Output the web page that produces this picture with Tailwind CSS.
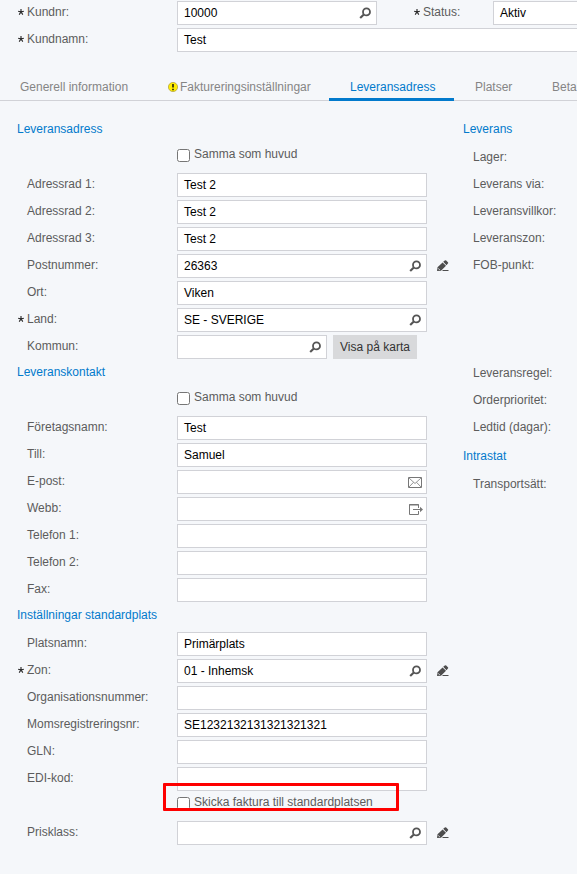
<!DOCTYPE html>
<html lang="sv">
<head>
<meta charset="utf-8">
<title>Kund</title>
<script src="https://cdn.jsdelivr.net/npm/@tailwindcss/browser@4"></script>
</head>
<body class="w-[577px] h-[874px] overflow-hidden bg-[#f5f7fa] text-[12px] text-[#5c5c5c]" style="font-family:'Liberation Sans',Arial,sans-serif">
<svg class="hidden">
  <symbol id="search" viewBox="0 0 12 12"><circle cx="7.5" cy="4.9" r="3.5" fill="none" stroke="#555" stroke-width="1.8"/><path d="M4.8 7.6 1.2 11.1" stroke="#555" stroke-width="2.1"/></symbol>
  <symbol id="pencil" viewBox="0 0 12 12"><path d="M0 11 .5 7.2 5.6 2.4 9 5.8 4 10.7ZM6.2 1.8 7.8.4Q8.5-.1 9.2.5L10.9 2.2Q11.5 2.9 10.9 3.6L9.5 5.2Z" fill="#4d4d4d"/><path d="m1.2 8.4 1.5 1.5" stroke="#f5f7fa" stroke-width=".9"/><path d="M5.5 10.5h6" stroke="#4d4d4d"/></symbol>
  <symbol id="mail" viewBox="0 0 14 11"><path d="M.5.5h13v10H.5Z" fill="none" stroke="#777"/><path d="m1 1 6 5.5L13 1M1 10l4.5-4.7M13 10 8.5 5.3" fill="none" stroke="#888" stroke-width=".9"/></symbol>
  <symbol id="open" viewBox="0 0 14 11"><path d="M9.5 4V.5h-9v10h9V7M0 1h10M4 5.5h8" fill="none" stroke="#777"/><path d="m11 2.7 3 2.8-3 2.8Z" fill="#777"/></symbol>
  <symbol id="star" viewBox="0 0 6 6"><path d="M3 3V0M3 3 .2 2.2M3 3l2.8-.8M3 3 1.2 5.6M3 3l1.8 2.6" stroke="#222" stroke-width="1.1"/></symbol>
</svg>

<header class="h-[73px] pt-px">
  <div class="flex h-[27px]">
    <div class="w-[177px] pl-[17px] leading-[22px] flex"><svg class="size-1.5 mt-2 ml-px mr-[3px]"><use href="#star"/></svg>Kundnr:</div>
    <div class="w-[200px] h-6 bg-white border border-[#d1d2d7] pl-1.5 pr-[5px] leading-[22px] text-black flex justify-between items-center">10000<svg class="size-3"><use href="#search"/></svg></div>
    <div class="w-[116px] pl-[36px] leading-[22px] flex"><svg class="size-1.5 mt-2 ml-px mr-[3px]"><use href="#star"/></svg>Status:</div>
    <div class="flex-1 h-6 bg-white border border-r-0 border-[#d1d2d7] pl-1.5 leading-[22px] text-black">Aktiv</div>
  </div>
  <div class="flex h-[27px]">
    <div class="w-[177px] pl-[17px] leading-[22px] flex"><svg class="size-1.5 mt-2 ml-px mr-[3px]"><use href="#star"/></svg>Kundnamn:</div>
    <div class="flex-1 h-6 bg-white border border-r-0 border-[#d1d2d7] pl-1.5 leading-[22px] text-black">Test</div>
  </div>
</header>

<nav class="flex h-[28px] shadow-[inset_0_-1px_0_#d1d2d7] leading-[28px] text-[#858585] whitespace-nowrap overflow-hidden">
  <div class="w-[168px] shrink-0 pl-5">Generell information</div>
  <div class="w-[161px] shrink-0 flex items-center gap-[2px]"><svg class="size-[10px]" viewBox="0 0 10 10"><circle cx="5" cy="5" r="4.6" fill="#ffed00" stroke="#b5a642" stroke-width=".8"/><path d="M5 2v3.6M5 6.7v1.5" stroke="#111" stroke-width="1.5"/></svg>Faktureringsinställningar</div>
  <div class="w-[125px] shrink-0 pl-[21px] text-[#027acc] border-b-[3px] border-[#027acc]">Leveransadress</div>
  <div class="w-[98px] shrink-0 pl-[21px]">Platser</div>
  <div class="shrink-0">Betalning</div>
</nav>

<main class="flex pt-[18px]">
  <section class="w-[463px]">
    <h2 class="h-[27px] pl-[17px] leading-5 text-[#027acc]">Leveransadress</h2>
    <label class="flex h-[27px] pl-[177px] pt-[3px] gap-1 leading-[11px]"><input type="checkbox" class="size-[13px] m-0">Samma som huvud</label>
    <div class="flex h-[27px]"><div class="w-[177px] pl-[27px] leading-[22px]">Adressrad 1:</div><div class="w-[250px] h-6 bg-white border border-[#d1d2d7] pl-1.5 leading-[22px] text-black">Test 2</div></div>
    <div class="flex h-[27px]"><div class="w-[177px] pl-[27px] leading-[22px]">Adressrad 2:</div><div class="w-[250px] h-6 bg-white border border-[#d1d2d7] pl-1.5 leading-[22px] text-black">Test 2</div></div>
    <div class="flex h-[27px]"><div class="w-[177px] pl-[27px] leading-[22px]">Adressrad 3:</div><div class="w-[250px] h-6 bg-white border border-[#d1d2d7] pl-1.5 leading-[22px] text-black">Test 2</div></div>
    <div class="flex h-[27px]"><div class="w-[177px] pl-[27px] leading-[22px]">Postnummer:</div><div class="w-[250px] h-6 bg-white border border-[#d1d2d7] pl-1.5 pr-[5px] leading-[22px] text-black flex justify-between items-center">26363<svg class="size-3"><use href="#search"/></svg></div><svg class="size-3 ml-[10px] mt-[6px]"><use href="#pencil"/></svg></div>
    <div class="flex h-[27px]"><div class="w-[177px] pl-[27px] leading-[22px]">Ort:</div><div class="w-[250px] h-6 bg-white border border-[#d1d2d7] pl-1.5 leading-[22px] text-black">Viken</div></div>
    <div class="flex h-[27px]"><div class="w-[177px] pl-[17px] leading-[22px] flex"><svg class="size-1.5 mt-2 ml-px mr-[3px]"><use href="#star"/></svg>Land:</div><div class="w-[250px] h-6 bg-white border border-[#d1d2d7] pl-1.5 pr-[5px] leading-[22px] text-black flex justify-between items-center">SE - SVERIGE<svg class="size-3"><use href="#search"/></svg></div></div>
    <div class="flex h-[27px]"><div class="w-[177px] pl-[27px] leading-[22px]">Kommun:</div><div class="w-[150px] h-6 bg-white border border-[#d1d2d7] pr-[5px] flex justify-end items-center"><svg class="size-3"><use href="#search"/></svg></div><button class="ml-1.5 w-[84px] h-6 bg-[#d8d9db] text-[#333] leading-6">Visa på karta</button></div>

    <h2 class="h-[27px] pl-[17px] leading-5 text-[#027acc]">Leveranskontakt</h2>
    <label class="flex h-[27px] pl-[177px] pt-[3px] gap-1 leading-[11px]"><input type="checkbox" class="size-[13px] m-0">Samma som huvud</label>
    <div class="flex h-[27px]"><div class="w-[177px] pl-[27px] leading-[22px]">Företagsnamn:</div><div class="w-[250px] h-6 bg-white border border-[#d1d2d7] pl-1.5 leading-[22px] text-black">Test</div></div>
    <div class="flex h-[27px]"><div class="w-[177px] pl-[27px] leading-[22px]">Till:</div><div class="w-[250px] h-6 bg-white border border-[#d1d2d7] pl-1.5 leading-[22px] text-black">Samuel</div></div>
    <div class="flex h-[27px]"><div class="w-[177px] pl-[27px] leading-[22px]">E-post:</div><div class="w-[250px] h-6 bg-white border border-[#d1d2d7] pr-1 pt-[6px] flex justify-end"><svg class="w-[14px] h-[11px]"><use href="#mail"/></svg></div></div>
    <div class="flex h-[27px]"><div class="w-[177px] pl-[27px] leading-[22px]">Webb:</div><div class="w-[250px] h-6 bg-white border border-[#d1d2d7] pr-[3px] pt-[6px] flex justify-end"><svg class="w-[14px] h-[11px]"><use href="#open"/></svg></div></div>
    <div class="flex h-[27px]"><div class="w-[177px] pl-[27px] leading-[22px]">Telefon 1:</div><div class="w-[250px] h-6 bg-white border border-[#d1d2d7]"></div></div>
    <div class="flex h-[27px]"><div class="w-[177px] pl-[27px] leading-[22px]">Telefon 2:</div><div class="w-[250px] h-6 bg-white border border-[#d1d2d7]"></div></div>
    <div class="flex h-[27px]"><div class="w-[177px] pl-[27px] leading-[22px]">Fax:</div><div class="w-[250px] h-6 bg-white border border-[#d1d2d7]"></div></div>

    <h2 class="h-[27px] pl-[17px] leading-5 text-[#027acc]">Inställningar standardplats</h2>
    <div class="flex h-[27px]"><div class="w-[177px] pl-[27px] leading-[22px]">Platsnamn:</div><div class="w-[250px] h-6 bg-white border border-[#d1d2d7] pl-1.5 leading-[22px] text-black">Primärplats</div></div>
    <div class="flex h-[27px]"><div class="w-[177px] pl-[17px] leading-[22px] flex"><svg class="size-1.5 mt-2 ml-px mr-[3px]"><use href="#star"/></svg>Zon:</div><div class="w-[250px] h-6 bg-white border border-[#d1d2d7] pl-1.5 pr-[5px] leading-[22px] text-black flex justify-between items-center">01 - Inhemsk<svg class="size-3"><use href="#search"/></svg></div><svg class="size-3 ml-[10px] mt-[6px]"><use href="#pencil"/></svg></div>
    <div class="flex h-[27px]"><div class="w-[177px] pl-[27px] leading-[22px]">Organisationsnummer:</div><div class="w-[250px] h-6 bg-white border border-[#d1d2d7]"></div></div>
    <div class="flex h-[27px]"><div class="w-[177px] pl-[27px] leading-[22px]">Momsregistreringsnr:</div><div class="w-[250px] h-6 bg-white border border-[#d1d2d7] pl-1.5 leading-[22px] text-black">SE1232132131321321321</div></div>
    <div class="flex h-[27px]"><div class="w-[177px] pl-[27px] leading-[22px]">GLN:</div><div class="w-[250px] h-6 bg-white border border-[#d1d2d7]"></div></div>
    <div class="flex h-[27px]"><div class="w-[177px] pl-[27px] leading-[22px]">EDI-kod:</div><div class="w-[250px] h-6 bg-white border border-[#d1d2d7]"></div></div>
    <label class="relative flex h-[27px] pl-[177px] pt-[3px] gap-1 leading-[11px]"><input type="checkbox" class="size-[13px] m-0">Skicka faktura till standardplatsen
      <!-- red highlight frame over the option -->
      <span class="absolute left-[163px] -top-[11px] w-[236px] h-[28px] border-3 border-[#fe0000] rounded-[1px]"></span></label>
    <div class="flex h-[27px]"><div class="w-[177px] pl-[27px] leading-[22px]">Prisklass:</div><div class="w-[250px] h-6 bg-white border border-[#d1d2d7] pr-[5px] flex justify-end items-center"><svg class="size-3"><use href="#search"/></svg></div><svg class="size-3 ml-[10px] mt-[6px]"><use href="#pencil"/></svg></div>
  </section>

  <section class="flex-1 whitespace-nowrap leading-[22px]">
    <h2 class="h-[27px] leading-5 text-[#027acc]">Leverans</h2>
    <div class="h-[27px] pl-[10px]">Lager:</div>
    <div class="h-[27px] pl-[10px]">Leverans via:</div>
    <div class="h-[27px] pl-[10px]">Leveransvillkor:</div>
    <div class="h-[27px] pl-[10px]">Leveranszon:</div>
    <div class="h-[27px] pl-[10px]">FOB-punkt:</div>
    <div class="h-[27px] pl-[10px] mt-[81px]">Leveransregel:</div>
    <div class="h-[27px] pl-[10px]">Orderprioritet:</div>
    <div class="h-[27px] pl-[10px]">Ledtid (dagar):</div>
    <h2 class="h-[30px] pt-[3px] leading-5 text-[#027acc]">Intrastat</h2>
    <div class="h-[27px] pl-[10px]">Transportsätt:</div>
  </section>
</main>
</body>
</html>
